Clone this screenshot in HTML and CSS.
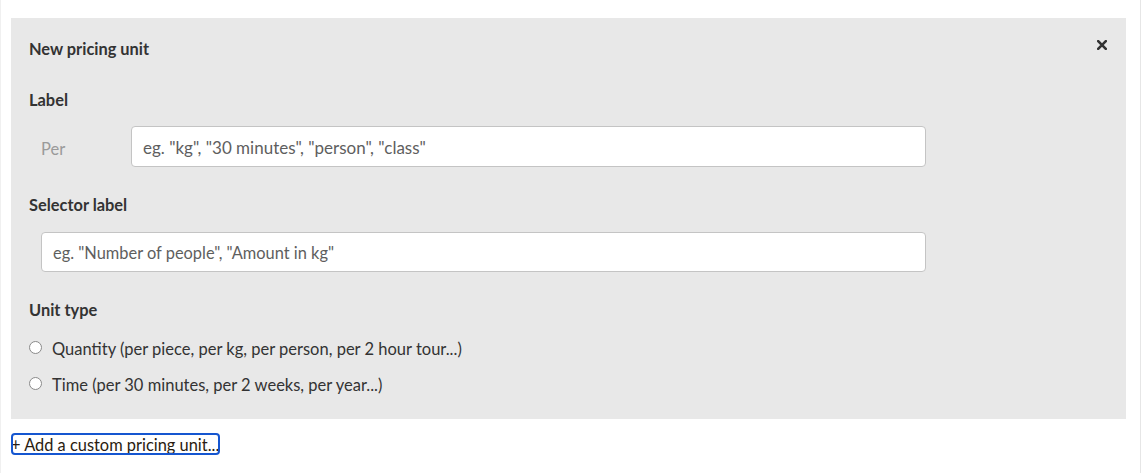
FILE: index.html
```html
<!DOCTYPE html>
<html>
<head>
<meta charset="utf-8">
<link rel="stylesheet" href="styles.css">
</head>
<body>
<div class="page">
  <section class="panel">
    <div class="panel-head">
      <h3 class="title">New pricing unit</h3>
      <button class="close" aria-label="Close">
        <svg width="10" height="10" viewBox="0 0 10 10"><path d="M1.2 1.2 L8.8 8.8 M8.8 1.2 L1.2 8.8" stroke="#333" stroke-width="2.6" stroke-linecap="square"/></svg>
      </button>
    </div>

    <div class="field-label label-first">Label</div>
    <div class="per-row">
      <span class="per">Per</span>
      <input class="text-input per-input" type="text" placeholder="eg. &quot;kg&quot;, &quot;30 minutes&quot;, &quot;person&quot;, &quot;class&quot;">
    </div>

    <div class="field-label label-sel">Selector label</div>
    <div class="sel-row">
      <input class="text-input sel-input" type="text" placeholder="eg. &quot;Number of people&quot;, &quot;Amount in kg&quot;">
    </div>

    <div class="field-label label-type">Unit type</div>
    <label class="radio-row first-radio"><input type="radio" name="ut" class="radio"><span>Quantity (per piece, per kg, per person, per 2 hour tour...)</span></label>
    <label class="radio-row"><input type="radio" name="ut" class="radio"><span>Time (per 30 minutes, per 2 weeks, per year...)</span></label>
  </section>
  <div class="add-row">
    <a class="add-link" href="#">+ Add a custom pricing unit...</a>
  </div>
</div>
</body>
</html>
```

FILE: styles.css
```css
html, body {
  margin: 0;
  padding: 0;
  background: #ffffff;
}
body {
  font-family: "Lato", "Open Sans", sans-serif;
  color: #333333;
}
.page {
  width: 1139px;
  height: 473px;
  border-left: 1px solid #f0f0f0;
  border-right: 1px solid #e6e6e6;
  padding-top: 18px;
  box-sizing: content-box;
}
.panel {
  margin: 0 14px 0 10px;
  background: #e8e8e8;
  padding: 20px 19px 23px 18px;
}
.panel-head {
  display: flex;
  justify-content: space-between;
  align-items: flex-start;
}
.title {
  margin: 0;
  font-size: 16.4px;
  font-weight: 700;
  line-height: 22px;
  color: #333333;
}
.close {
  border: 0;
  background: none;
  padding: 0;
  margin-top: 2px;
  width: 10px;
  height: 10px;
  display: flex;
}
.field-label {
  font-size: 16.4px;
  font-weight: 700;
  line-height: 24px;
  color: #333333;
}
.label-first { margin-top: 28px; }
.label-sel { margin-top: 26px; }
.label-type { margin-top: 26px; }
.per-row {
  display: flex;
  align-items: center;
  margin-top: 14px;
  padding-left: 12px;
}
.per {
  width: 90px;
  font-size: 16.5px;
  color: #9a9a9a;
  line-height: 20px;
  padding-top: 5px;
}
.text-input {
  box-sizing: border-box;
  height: 41px;
  border: 1px solid #c4c4c4;
  border-radius: 4px;
  background: #ffffff;
  padding: 1px 11px 0;
  font-family: "Lato", "Open Sans", sans-serif;
  font-size: 16.4px;
  color: #333;
  outline: none;
}
.text-input::placeholder {
  color: #5e5e5e;
}
.per-input {
  width: 795px;
  font-size: 17px;
}
.sel-input {
  width: 885px;
  height: 40px;
}
.sel-row {
  margin-top: 15px;
  padding-left: 12px;
}
.radio-row {
  display: flex;
  align-items: center;
  font-size: 16.5px;
  line-height: 22px;
  color: #333333;
  margin-top: 14px;
}
.first-radio { margin-top: 16px; }
.radio {
  appearance: none;
  -webkit-appearance: none;
  width: 13px;
  height: 13px;
  margin: -3px 10px 0 0;
  border: 1px solid #8a8a8a;
  border-radius: 50%;
  background: #ffffff;
  box-sizing: border-box;
  flex: none;
}
.add-row {
  margin-top: 14px;
  padding-left: 10px;
}
.add-link {
  display: inline-block;
  font-size: 16.4px;
  line-height: 21px;
  padding-top: 1px;
  color: #2a1c10;
  text-decoration: none;
  padding-right: 1px;
  outline: 2px solid #1556d0;
  outline-offset: -2px;
  border-radius: 4px;
}
```
